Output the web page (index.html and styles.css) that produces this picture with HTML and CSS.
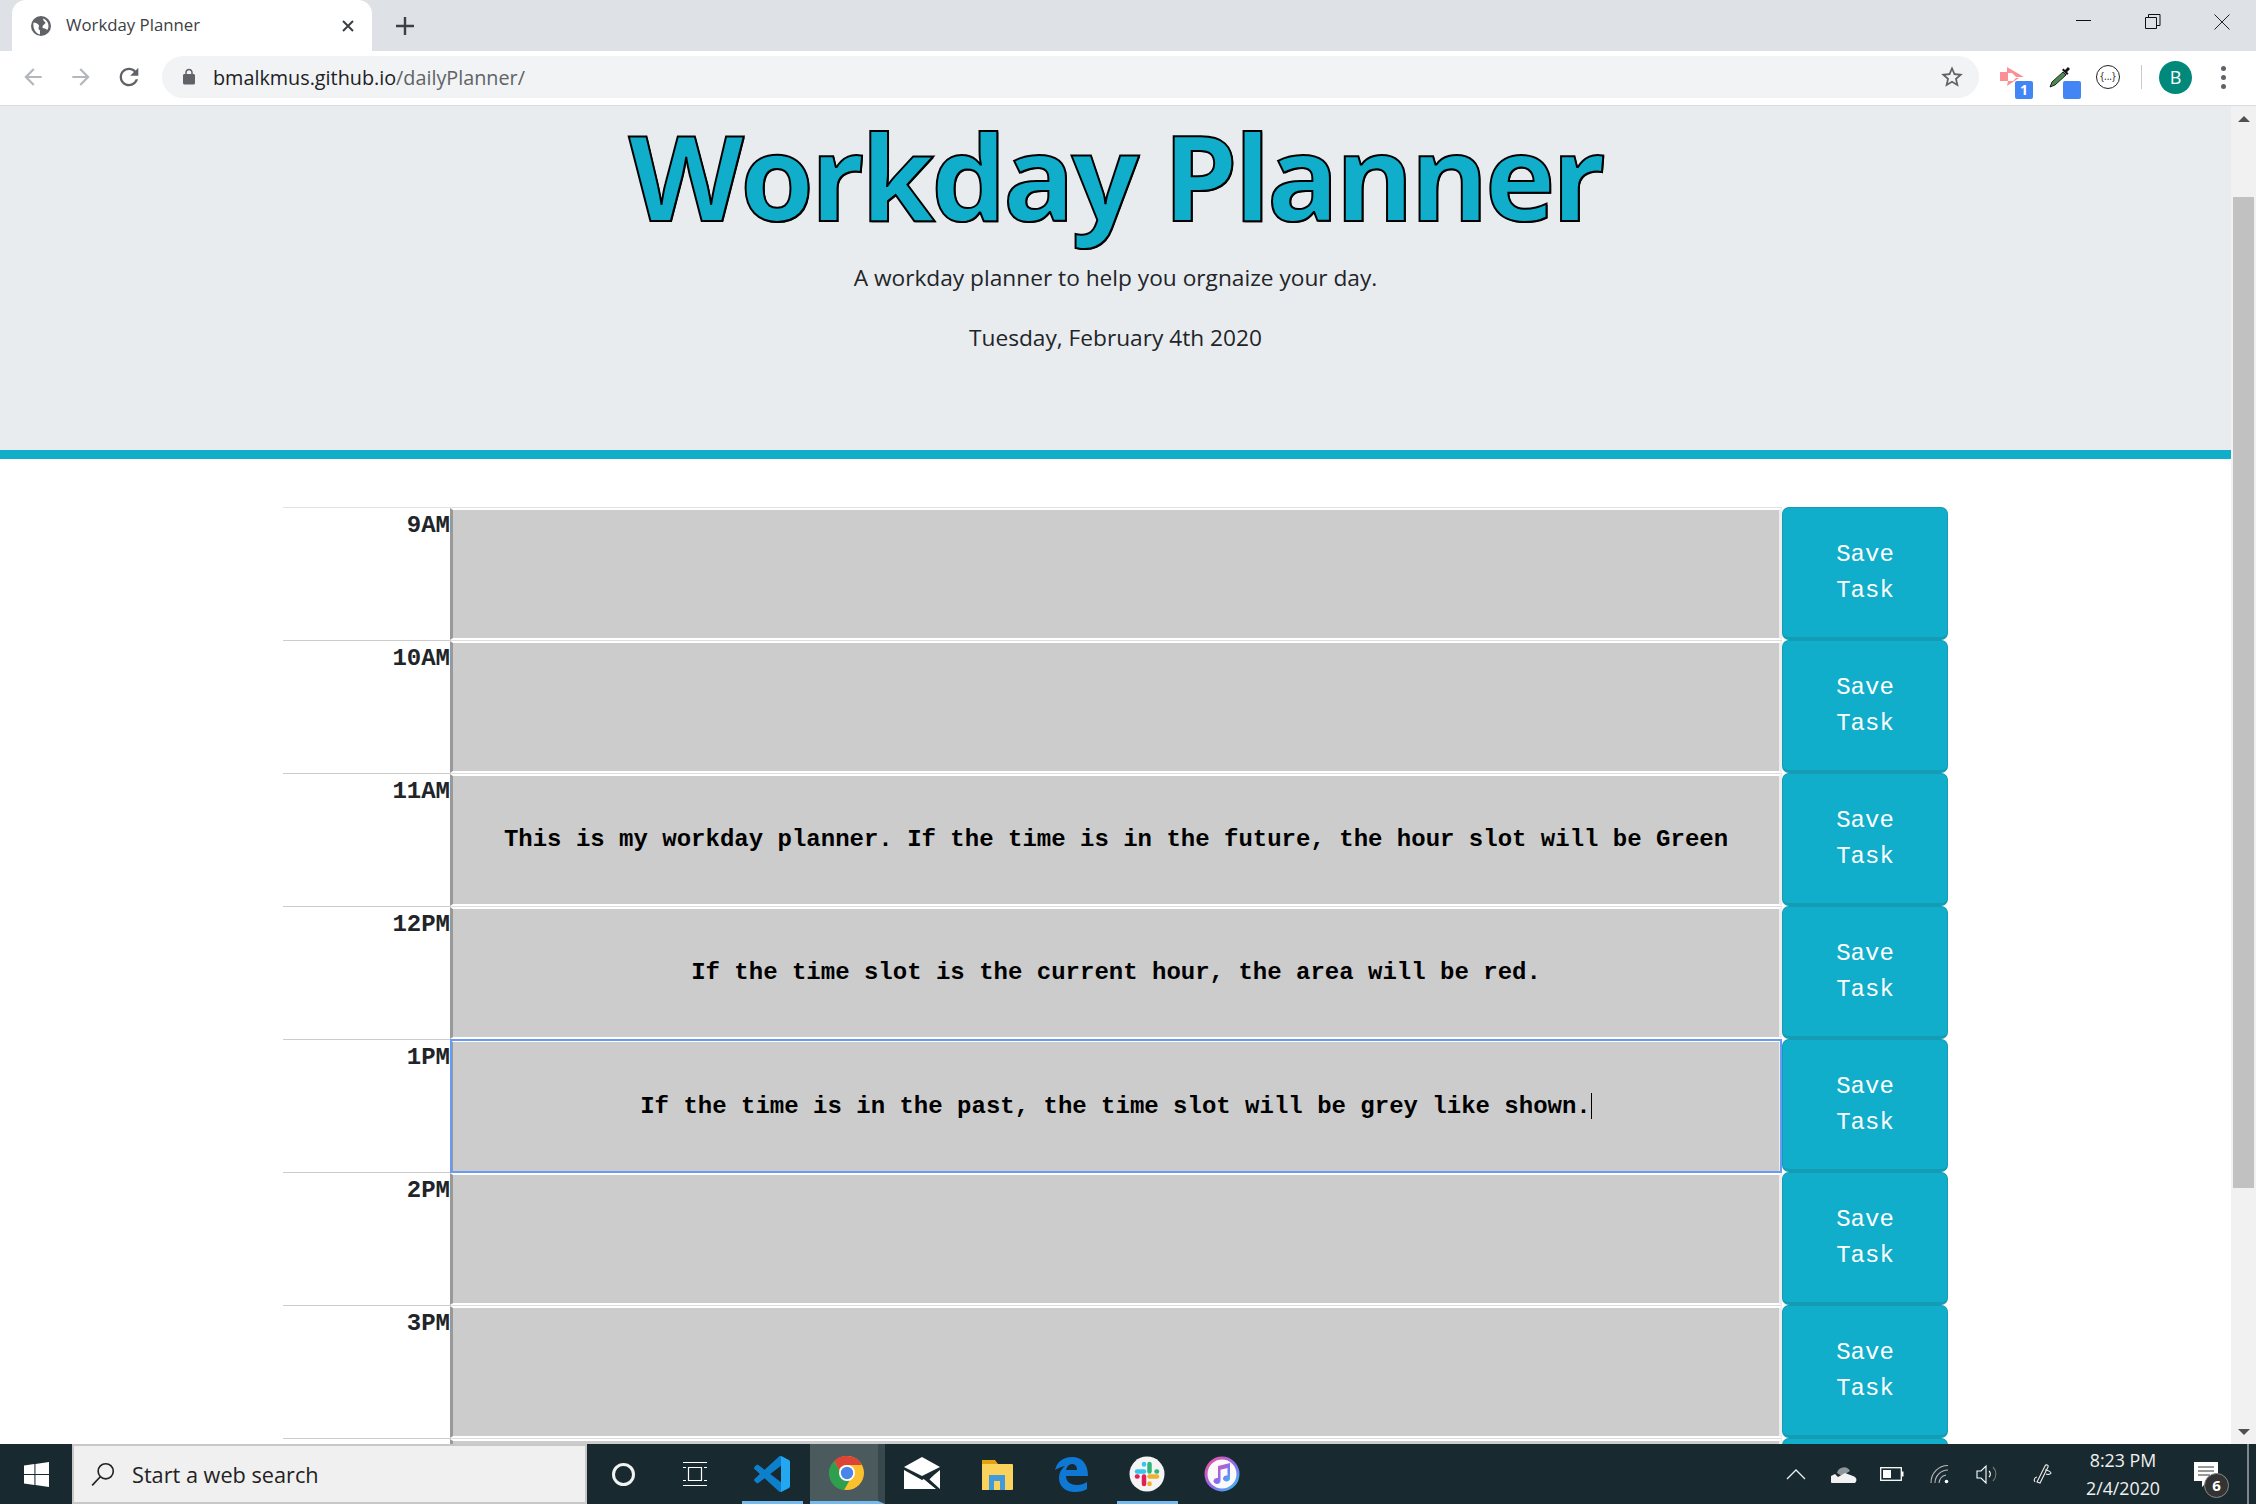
FILE: index.html
```html
<!DOCTYPE html>
<html lang="en">
<head>
<meta charset="utf-8">
<title>Workday Planner</title>
<link rel="stylesheet" href="styles.css">
</head>
<body>
<div class="tabstrip">
  <div class="tab">
    <svg class="favicon" viewBox="0 0 24 24" width="24" height="24"><circle cx="12" cy="12" r="10" fill="#5f6368"/><path fill="#fff" d="M4.500 8.500c2 0 4.500 1 5.500 3 0 2-1.500 3 1 5v4C6.500 19.500 3.500 14 4.500 8.500zM14 4.500c3 1 5.500 4 5.500 7.500 0 1.500-.5 3-1.500 4-1-2-3.500-1-4.500-2.500 0-3 2.500-3 3-5-1-1-2.500-2-2.500-4z"/></svg>
    <span class="tab-title">Workday Planner</span>
    <svg class="tab-close" viewBox="0 0 14 14" width="14" height="14"><path d="M2 2l10 10M12 2L2 12" stroke="#3c4043" stroke-width="2" fill="none"/></svg>
  </div>
  <svg class="new-tab" viewBox="0 0 20 20" width="20" height="20"><path d="M10 1v18M1 10h18" stroke="#3c4043" stroke-width="2.400" fill="none"/></svg>
  <div class="win-controls">
    <svg viewBox="0 0 16 16" width="16" height="16" class="win-min"><path d="M0 6.500h15" stroke="#111" stroke-width="1"/></svg>
    <svg viewBox="0 0 16 16" width="16" height="16" class="win-max"><path d="M.5 3.500h11v11H.5zM3.500 3.500V.5h11.500v11h-3.500" stroke="#111" stroke-width="1" fill="none"/></svg>
    <svg viewBox="0 0 16 16" width="16" height="16" class="win-close"><path d="M.5.5l15 15M15.500.5l-15 15" stroke="#222" stroke-width="1" fill="none"/></svg>
  </div>
</div>
<div class="toolbar">
  <svg class="nav nav-back" viewBox="0 0 24 24" width="26" height="26"><path fill="#b4b7bb" d="M20 11H7.830l5.590-5.590L12 4l-8 8 8 8 1.410-1.410L7.830 13H20v-2z"/></svg>
  <svg class="nav nav-fwd" viewBox="0 0 24 24" width="26" height="26"><path fill="#b4b7bb" d="M4 11h12.170l-5.590-5.590L12 4l8 8-8 8-1.410-1.410L16.170 13H4v-2z"/></svg>
  <svg class="nav nav-reload" viewBox="0 0 24 24" width="28" height="28"><path fill="#5f6368" d="M17.650 6.350C16.200 4.900 14.210 4 12 4c-4.420 0-7.990 3.580-7.990 8s3.570 8 7.990 8c3.730 0 6.840-2.550 7.730-6h-2.080c-.82 2.330-3.040 4-5.650 4-3.310 0-6-2.690-6-6s2.690-6 6-6c1.660 0 3.140.69 4.220 1.780L13 11h7V4l-2.350 2.350z"/></svg>
  <div class="omnibox">
    <svg class="lock" viewBox="0 0 24 24" width="18" height="18"><path fill="#5f6368" d="M18 8h-1V6c0-2.760-2.240-5-5-5S7 3.240 7 6v2H6c-1.100 0-2 .9-2 2v10c0 1.100.9 2 2 2h12c1.100 0 2-.9 2-2V10c0-1.100-.9-2-2-2zm-9-2c0-1.660 1.340-3 3-3s3 1.340 3 3v2H9V6z"/></svg>
    <span class="url"><span class="host">bmalkmus.github.io</span><span class="path">/dailyPlanner/</span></span>
    <svg class="star" viewBox="0 0 24 24" width="26" height="26"><path fill="#5f6368" d="M22 9.240l-7.190-.62L12 2 9.190 8.630 2 9.240l5.460 4.730L5.820 21 12 17.270 18.180 21l-1.630-7.030L22 9.240zM12 15.400l-3.760 2.270 1-4.280-3.320-2.880 4.380-.38L12 6.100l1.710 4.040 4.380.38-3.320 2.880 1 4.280L12 15.400z"/></svg>
  </div>
  <div class="ext ext-a">
    <svg viewBox="0 0 25 20" width="25" height="20"><path fill="#fb8f94" d="M0 5h8v9H0zM7 0l17 10h-8l-4-4H7zM8 14h5l3-3h3L7 19z"/></svg>
    <span class="ext-badge">1</span>
  </div>
  <div class="ext ext-b">
    <svg viewBox="0 0 24 24" width="24" height="24"><path d="M2 22l2-5L15 7l3 3L7 20z" fill="#4a8a4e" stroke="#222" stroke-width="1"/><path d="M14 5l5 5 1.500-1.500-1.500-1.500 3-3-2-2-3 3-1.500-1.500z" fill="#111"/></svg>
    <span class="ext-badge"></span>
  </div>
  <div class="ext ext-c"><span class="json-ring">{...}</span></div>
  <div class="tool-sep"></div>
  <div class="avatar">B</div>
  <div class="dots"><i></i><i></i><i></i></div>
</div>

<div class="viewport">
  <div class="page">
    <header class="jumbotron">
      <h1 class="title">Workday Planner</h1>
      <p class="lead">A workday planner to help you orgnaize your day.</p>
      <p class="lead today">Tuesday, February 4th 2020</p>
    </header>
    <main class="planner">
      <div class="row"><div class="hour">9AM</div><div class="slot"><div class="slot-text"></div></div><button class="save">Save<br>Task</button></div>
      <div class="row"><div class="hour">10AM</div><div class="slot"><div class="slot-text"></div></div><button class="save">Save<br>Task</button></div>
      <div class="row"><div class="hour">11AM</div><div class="slot"><div class="slot-text">This is my workday planner. If the time is in the future, the hour slot will be Green</div></div><button class="save">Save<br>Task</button></div>
      <div class="row"><div class="hour">12PM</div><div class="slot"><div class="slot-text">If the time slot is the current hour, the area will be red.</div></div><button class="save">Save<br>Task</button></div>
      <div class="row"><div class="hour">1PM</div><div class="slot slot-focus"><div class="slot-text"><span>If the time is in the past, the time slot will be grey like shown.<i class="caret"></i></span></div></div><button class="save">Save<br>Task</button></div>
      <div class="row"><div class="hour">2PM</div><div class="slot"><div class="slot-text"></div></div><button class="save">Save<br>Task</button></div>
      <div class="row"><div class="hour">3PM</div><div class="slot"><div class="slot-text"></div></div><button class="save">Save<br>Task</button></div>
      <div class="row"><div class="hour"></div><div class="slot"><div class="slot-text"></div></div><button class="save"></button></div>
    </main>
  </div>
  <div class="scrollbar">
    <span class="arrow-up"></span>
    <div class="thumb"></div>
    <span class="arrow-down"></span>
  </div>
</div>

<footer class="taskbar">
  <div class="start">
    <svg viewBox="0 0 24 24" width="25" height="25"><path fill="#fff" d="M0 3.400l10-1.400v9.500H0zM11 1.900L24 0v11.500H11zM0 12.500h10V22L0 20.600zM11 12.500h13V24l-13-1.900z"/></svg>
  </div>
  <div class="search">
    <svg viewBox="0 0 24 24" width="26" height="26"><circle cx="14.500" cy="9.500" r="7" fill="none" stroke="#222" stroke-width="1.500"/><path d="M9.500 14.500L2 22.500" stroke="#222" stroke-width="1.500"/></svg>
    <span>Start a web search</span>
  </div>
  <div class="task-cell cortana"><span class="ring"></span></div>
  <div class="task-cell taskview">
    <svg viewBox="0 0 26 26" width="26" height="26"><path d="M1 1.500h24M1 24.500h24M6.500 6.500h13v13h-13zM1 6.500h3M22 6.500h3M1 19.500h3M22 19.500h3" stroke="#fff" stroke-width="1.200" fill="none"/></svg>
  </div>
  <div class="apps">
    <div class="app underlined">
      <svg viewBox="0 0 100 100" width="36" height="36"><path fill="#0e7fcb" fill-rule="evenodd" d="M70.912 99.317c1.575.614 3.371.575 4.960-.19l20.589-9.907C98.624 88.179 100 85.989 100 83.587V16.413c0-2.402-1.376-4.591-3.539-5.632L75.873.874c-2.087-1.004-4.528-.758-6.360.573-.261.190-.51.402-.744.636L29.355 38.041 12.187 25.010c-1.598-1.213-3.833-1.114-5.318.236L1.363 30.255c-1.816 1.651-1.818 4.508-.004 6.162L16.247 50 1.359 63.583c-1.814 1.654-1.812 4.511.004 6.162l5.506 5.009c1.485 1.350 3.720 1.449 5.318.236l17.168-13.032 39.414 35.958c.623.624 1.356 1.094 2.143 1.401zM75.015 27.299L45.109 50l29.906 22.701V27.299z"/><path fill="#22a7f0" d="M75 0l21.500 10.800Q100 13 100 16.400v67.200q0 3.400-3.500 5.600L75 100z"/></svg>
    </div>
    <div class="app active">
      <svg viewBox="0 0 36 36" width="36" height="36"><circle cx="18" cy="18" r="17" fill="#fbc02d"/><path fill="#db4437" d="M18 1a17 17 0 0 1 15 9H18a8 8 0 0 0-8 5L5 6a17 17 0 0 1 13-5z"/><path fill="#2e9e4f" d="M5 6l7.500 13a7.500 7.500 0 0 0 8 6.500L15 35A17 17 0 0 1 5 6z"/><circle cx="18" cy="18" r="8" fill="#fff"/><circle cx="18" cy="18" r="6.200" fill="#4a86e8"/></svg>
    </div>
    <div class="app">
      <svg viewBox="0 0 36 36" width="36" height="36"><path fill="#fff" d="M0 11L18 1l18 10-18 9z"/><path fill="#fff" d="M0 14l18 10 13-7-11 6 12 10v0H0zM36 14v19L25 23z"/><path fill="#1a2a30" d="M20 22l14-8-9 10 6 8-11-9z"/></svg>
    </div>
    <div class="app">
      <svg viewBox="0 0 36 36" width="36" height="36"><path fill="#e0a30f" d="M3 4h13l3 4H3z"/><path fill="#fbd35c" d="M3 8h30a1 1 0 0 1 1 1v24a1 1 0 0 1-1 1H3z"/><path fill="#3f9bdc" d="M10 34V19h16v15h-5v-9h-6v9z"/></svg>
    </div>
    <div class="app">
      <svg viewBox="0 0 36 36" width="36" height="36"><path fill="#0f78d4" fill-rule="evenodd" d="M1 14C3 6 9 1 18 1c10 0 16 7 16 19H12c0 6 5 9 11 9 4 0 7-1 10-3v7c-3 2-7 3-12 3-10 0-16-6-16-14 0-5 2-9 6-12-5 1-8 3-10 4zM12 14h11c0-4-2-6-5-6-3 0-5 2-6 6z"/></svg>
    </div>
    <div class="app underlined">
      <svg viewBox="0 0 36 36" width="36" height="36"><circle cx="18" cy="18" r="17.500" fill="#f4f4f4"/><g fill="none" stroke-linecap="round" stroke-width="4.500"><path stroke="#36c5f0" d="M8 15.500h7"/><path stroke="#36c5f0" d="M15 8v.5"/><path stroke="#2eb67d" d="M20.500 8v7.500"/><path stroke="#2eb67d" d="M28 15.500h-.5"/><path stroke="#ecb22e" d="M28 20.500h-7.500"/><path stroke="#ecb22e" d="M20.500 28v-.5"/><path stroke="#e01e5a" d="M15 28v-7.500"/><path stroke="#e01e5a" d="M8 20.500h.5"/></g></svg>
    </div>
    <div class="app">
      <svg viewBox="0 0 36 36" width="36" height="36"><defs><linearGradient id="itr" x1="0" y1="0" x2="1" y2="1"><stop offset="0" stop-color="#f7509e"/><stop offset=".55" stop-color="#8a6cf0"/><stop offset="1" stop-color="#33c3f3"/></linearGradient></defs><circle cx="18" cy="18" r="16" fill="#fafafa" stroke="url(#itr)" stroke-width="3"/><path fill="url(#itr)" d="M14 10l12-3v15.500a3.500 3 0 1 1-2.500-2.900V12l-7 1.800V25a3.500 3 0 1 1-2.500-2.900z"/></svg>
    </div>
  </div>
  <div class="tray">
    <div class="tray-cell"><svg viewBox="0 0 20 12" width="20" height="12"><path d="M1 11l9-9 9 9" stroke="#eee" stroke-width="1.300" fill="none"/></svg></div>
    <div class="tray-cell"><svg viewBox="0 0 26 18" width="26" height="18"><path fill="#8d979b" d="M6 8a7 7 0 0 1 13-2l-8 5z"/><path fill="#f2f2f2" d="M1 18a4 4 0 0 1-1-7l4-2 3 3 7-4 8 3a4 4 0 0 1 2 7H1z"/></svg></div>
    <div class="tray-cell"><svg viewBox="0 0 24 14" width="24" height="14"><rect x=".7" y=".7" width="20.600" height="12.600" fill="none" stroke="#fff" stroke-width="1.300"/><rect x="3" y="3" width="8" height="8" fill="#fff"/><rect x="22" y="4.500" width="1.500" height="5" fill="#fff"/></svg></div>
    <div class="tray-cell"><svg viewBox="0 0 20 20" width="20" height="20"><path d="M1 19A17 17 0 0 1 18 1.500M5 19A13 13 0 0 1 18 6M9 19a9 9 0 0 1 7-8" stroke="#bbb" stroke-width="1.100" fill="none"/><circle cx="16.500" cy="17.500" r="1.800" fill="#fff"/></svg></div>
    <div class="tray-cell"><svg viewBox="0 0 24 20" width="24" height="20"><path d="M1 7h4l5-5v17l-5-5H1z" stroke="#fff" stroke-width="1.100" fill="none"/><path d="M13 7a4 4 0 0 1 0 6" stroke="#fff" stroke-width="1.100" fill="none"/><path d="M17 3a10 10 0 0 1 0 14" stroke="#777" stroke-width="1.100" fill="none"/></svg></div>
    <div class="tray-cell pen"><svg viewBox="0 0 22 22" width="22" height="22"><path d="M6 19L14 3c1-2 4-1 3 1l-8 16zM4 19a3 3 0 0 1 2-5M14 7c3 0 6 2 6 3s-3 2-5 1" stroke="#eee" stroke-width="1.100" fill="none"/></svg></div>
    <div class="clock"><span>8:23 PM</span><span>2/4/2020</span></div>
    <div class="notify">
      <svg viewBox="0 0 24 25" width="24" height="25"><path fill="#fff" d="M0 0h24v19H14l-6 6v-6H0z"/><path d="M4 5h16M4 9h16M4 13h12" stroke="#333" stroke-width="1"/></svg>
      <span class="notify-badge">6</span>
    </div>
  </div>
</footer>
</body>
</html>
```
FILE: styles.css
```css
* { box-sizing: border-box; }
html, body { margin: 0; padding: 0; }
body {
  width: 2256px;
  height: 1504px;
  overflow: hidden;
  display: flex;
  flex-direction: column;
  font-family: "Open Sans", sans-serif;
  background: #fff;
}

/* browser chrome */
.tabstrip {
  height: 51px;
  flex: none;
  background: #dee1e6;
  display: flex;
  align-items: center;
  padding-left: 12px;
  position: relative;
  z-index: 3;
}
.tab {
  width: 360px;
  height: 51px;
  background: #fff;
  border-radius: 14px 14px 0 0;
  display: flex;
  align-items: center;
  padding: 0 17px;
}
.favicon { flex: none; }
.tab-title {
  margin: -2px 0 0 13px;
  font-size: 16.800px;
  color: #3c4043;
  flex: 1;
}
.new-tab { margin-left: 23px; }
.win-controls { margin-left: auto; display: flex; align-items: center; height: 51px; padding-right: 26px; }
.win-controls svg { margin-top: -8px; }
.win-min { margin-right: 53px; }
.win-max { margin-right: 53px; }

.toolbar {
  height: 55px;
  flex: none;
  background: #fff;
  border-bottom: 1px solid #dadce0;
  display: flex;
  align-items: center;
  padding: 0 0 2px 20px;
  position: relative;
  z-index: 3;
}
.nav-fwd { margin-left: 22px; }
.nav-reload { margin-left: 21px; }
.omnibox {
  margin-left: 19px;
  width: 1817px;
  height: 42px;
  border-radius: 21px;
  background: #f1f3f4;
  display: flex;
  align-items: center;
  padding: 0 14px 0 18px;
}
.lock { flex: none; }
.url { margin-left: 15px; font-size: 19.800px; flex: 1; white-space: nowrap; }
.host { color: #202124; }
.path { color: #5f6368; }
.ext { position: relative; width: 36px; height: 36px; display: flex; align-items: center; justify-content: center; flex: none; }
.ext-a { margin-left: 15px; }
.ext-b { margin-left: 12px; }
.ext-c { margin-left: 12px; }
.ext-badge {
  position: absolute;
  right: -3px;
  bottom: -4px;
  width: 18px;
  height: 18px;
  border-radius: 2px;
  background: #4285f4;
  color: #fff;
  font: bold 14px/18px "Open Sans", sans-serif;
  text-align: center;
}
.json-ring {
  width: 24px;
  height: 24px;
  border: 1.500px solid #222;
  border-radius: 50%;
  font: 10px/20px "Open Sans", sans-serif;
  color: #222;
  text-align: center;
  white-space: nowrap;
}
.tool-sep { width: 1px; height: 24px; background: #c8cacd; margin-left: 15px; }
.avatar {
  width: 33px;
  height: 33px;
  margin-left: 17px;
  border-radius: 50%;
  background: #00897b;
  color: #fff;
  text-align: center;
  font-size: 18px;
  line-height: 33px;
  flex: none;
}
.dots { margin-left: 29px; display: flex; flex-direction: column; gap: 4px; }
.dots i { width: 5px; height: 5px; border-radius: 50%; background: #5f6368; }

/* page viewport */
.viewport { flex: 1; min-height: 0; display: flex; }
.page { width: 2231px; background: #fff; }
.jumbotron {
  height: 353px;
  background: #e9ecef;
  border-bottom: 9px solid #10aecb;
  padding-top: 4px;
  text-align: center;
}
.title {
  margin: 0;
  font-size: 119px;
  line-height: 131px;
  font-weight: 700;
  letter-spacing: -3.500px;
  color: #10aecb;
  -webkit-text-stroke: 2px #000;
  text-shadow: 1px 1px 0 #000;
}
.lead {
  margin: 19px 0 0;
  font-size: 22.700px;
  line-height: 36px;
  color: #212529;
}
.today { margin-top: 24px; }
.planner { width: 1665px; height: 937px; overflow: hidden; margin: 48px auto 0; }
.row { display: flex; height: 133px; font-family: "Liberation Mono", "Courier New", monospace; font-size: 24px; line-height: 36px; }
.hour {
  width: 167px;
  flex: none;
  border-top: 1px solid #e2e2e2;
  text-align: right;
  font-weight: 700;
  color: #212529;
}
.row + .row .hour { border-top-color: #ccc; }
.slot {
  flex: 1;
  min-width: 0;
  border-top: 1px solid #e2e2e2;
  display: flex;
}
.row + .row .slot { border-top-color: #ddd; }
.slot-focus {
  position: relative;
  z-index: 1;
  margin-bottom: -1px;
  outline: 2px solid #6a9bf4;
  outline-offset: -2px;
}
.slot-text {
  flex: 1;
  background: #ccc;
  background-clip: padding-box;
  border-style: solid;
  border-width: 2px 3px 2px 3px;
  border-color: #fff #eee #fff #999;
  display: flex;
  align-items: center;
  justify-content: center;
  font-weight: 700;
  color: #000;
  white-space: pre;
}
.caret { display: inline-block; width: 1px; height: 26px; background: #000; vertical-align: -6px; }
.save {
  width: 166px;
  flex: none;
  padding: 0;
  background: #10aecb;
  border: 1px solid #149cb5;
  border-bottom-width: 3px;
  border-radius: 7px;
  color: #fff;
  font: inherit;
  position: relative;
  z-index: 2;
}

/* scrollbar */
.scrollbar { width: 25px; flex: none; background: #f1f1f1; display: flex; flex-direction: column; align-items: center; padding-top: 10px; }
.arrow-up { width: 0; height: 0; border: 6px solid transparent; border-top: 0; border-bottom: 6px solid #505050; }
.thumb { width: 21px; height: 991px; margin-top: 75px; background: #c1c1c1; }
.arrow-down { width: 0; height: 0; margin-top: 241px; border: 6px solid transparent; border-bottom: 0; border-top: 6px solid #505050; }

/* taskbar */
.taskbar { height: 60px; flex: none; background: #182a30; display: flex; align-items: stretch; color: #fff; position: relative; z-index: 3; }
.start { width: 72px; display: flex; align-items: center; justify-content: center; }
.search {
  width: 515px;
  background: #f0f0f0;
  border: 2px solid #c8c8c8;
  display: flex;
  align-items: center;
  padding-left: 16px;
  color: #222;
  font-size: 21.700px;
}
.search svg { margin-right: 16px; }
.task-cell { display: flex; align-items: center; justify-content: center; }
.cortana { width: 73px; }
.ring { width: 23px; height: 23px; border: 3px solid #f2f2f2; border-radius: 50%; }
.taskview { width: 70px; }
.apps { display: flex; margin-left: 4.500px; }
.app { width: 75px; display: flex; align-items: center; justify-content: center; position: relative; }
.underlined::after { content: ""; position: absolute; left: 7px; right: 7px; bottom: 0; height: 3px; background: #76b9ed; }
.active { background: #4b5a5d; border-right: 7px solid #39484c; border-bottom: 3px solid #76b9ed; padding-left: 7px; }
.tray { margin-left: auto; display: flex; align-items: stretch; width: 484px; flex: none; }
.tray-cell { width: 48px; flex: none; display: flex; align-items: center; justify-content: center; }
.pen { width: 61px; padding-right: 1px; }
.clock { width: 100px; flex: none; display: flex; flex-direction: column; align-items: center; justify-content: center; font-size: 17.800px; line-height: 28px; color: #f0f0f0; }
.notify { width: 76px; flex: none; padding-left: 21px; display: flex; align-items: center; position: relative; border-right: 2px solid #7d888c; }
.notify-badge {
  position: absolute;
  left: 31px;
  top: 29px;
  width: 25px;
  height: 25px;
  border-radius: 50%;
  background: #333;
  border: 1px solid #888;
  color: #fff;
  text-align: center;
  font-size: 15px;
  font-weight: 700;
  line-height: 23px;
}
```
